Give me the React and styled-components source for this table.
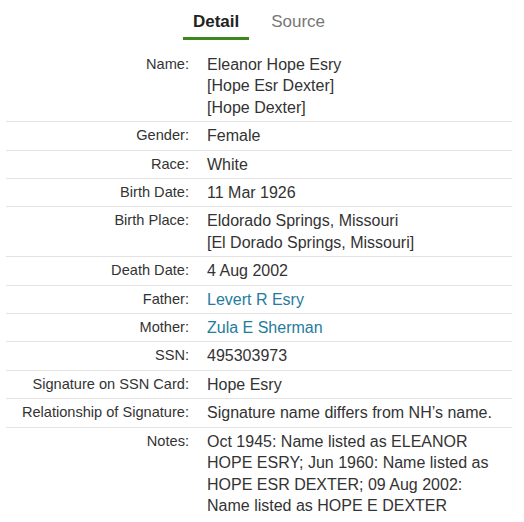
import React from "react";
import styled, { createGlobalStyle } from "styled-components";

const Global = createGlobalStyle`
  html, body { margin: 0; padding: 0; background: #fff; }
  body { font-family: "Liberation Sans", Arial, sans-serif; color: #333; }
`;

const Page = styled.div`
  margin: 0 12px 0 6px;
`;

const TabList = styled.div`
  display: flex;
  justify-content: center;
  gap: 12px;
  margin-bottom: 11px;
`;

const Tab = styled.div`
  padding: 10px 10px 3px;
  line-height: 24px;
  font-size: 17px;
  font-weight: ${(p) => (p.$active ? 700 : 400)};
  color: ${(p) => (p.$active ? "#222" : "#777")};
  border-bottom: 3px solid ${(p) => (p.$active ? "#3f861c" : "transparent")};
`;

const Table = styled.div`
  display: flex;
  flex-direction: column;
`;

const Row = styled.div`
  display: grid;
  grid-template-columns: 183px 1fr;
  column-gap: 18px;
  padding: 3px 7px 3px 0;
  border-bottom: ${(p) => (p.$last ? "none" : "1px solid #e3e3e3")};
`;

const Label = styled.div`
  text-align: right;
  font-size: 14.6px;
  line-height: 21.4px;
  color: #333;
`;

const Value = styled.div`
  font-size: 16px;
  line-height: 21.4px;
  color: #333;
`;

const Link = styled.a`
  color: #247c9c;
  text-decoration: none;
`;

const rows = [
  ["Name:", ["Eleanor Hope Esry", "[Hope Esr Dexter]", "[Hope Dexter]"]],
  ["Gender:", ["Female"]],
  ["Race:", ["White"]],
  ["Birth Date:", ["11 Mar 1926"]],
  ["Birth Place:", ["Eldorado Springs, Missouri", "[El Dorado Springs, Missouri]"]],
  ["Death Date:", ["4 Aug 2002"]],
  ["Father:", ["Levert R Esry"], true],
  ["Mother:", ["Zula E Sherman"], true],
  ["SSN:", ["495303973"]],
  ["Signature on SSN Card:", ["Hope Esry"]],
  ["Relationship of Signature:", ["Signature name differs from NH\u2019s name."]],
  [
    "Notes:",
    [
      "Oct 1945: Name listed as ELEANOR HOPE ESRY; Jun 1960: Name listed as HOPE ESR DEXTER; 09 Aug 2002: Name listed as HOPE E DEXTER",
    ],
  ],
];

export default function App() {
  return (
    <Page>
      <Global />
      <TabList>
        <Tab $active>Detail</Tab>
        <Tab>Source</Tab>
      </TabList>
      <Table>
        {rows.map(([label, lines, link], i) => (
          <Row key={label} $last={i === rows.length - 1}>
            <Label>{label}</Label>
            <Value>
              {lines.map((l) => (
                <div key={l}>{link ? <Link href="#">{l}</Link> : l}</div>
              ))}
            </Value>
          </Row>
        ))}
      </Table>
    </Page>
  );
}
